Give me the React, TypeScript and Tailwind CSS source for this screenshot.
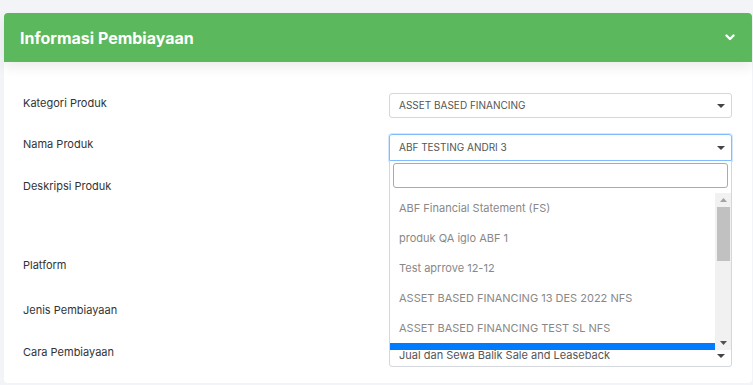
import React from "react";

const Caret = () => (
  <svg width="8" height="4" viewBox="0 0 8 4" className="shrink-0">
    <path d="M0 0 L8 0 L4 4 Z" fill="#444" />
  </svg>
);

const Row = ({
  label,
  h,
  children,
  z,
}: {
  label: string;
  h: string;
  children?: React.ReactNode;
  z?: string;
}) => (
  <div className={`flex ${h} ${z ?? ""}`}>
    <div className="w-[366px] shrink-0 pt-[2px] text-[11px] leading-[16px] text-[#333]">{label}</div>
    <div className="relative flex-1">{children}</div>
  </div>
);

const options = [
  "ABF Financial Statement (FS)",
  "produk QA iglo ABF 1",
  "Test aprrove 12-12",
  "ASSET BASED FINANCING 13 DES 2022 NFS",
  "ASSET BASED FINANCING TEST SL NFS",
];

export default function App() {
  return (
    <div
      className="min-h-[385px] w-[753px] bg-[#f3f4f8] pl-[4px] pr-[1px] pt-[13px]"
      style={{ fontFamily: "Inter, 'Noto Sans', sans-serif" }}
    >
      <div className="flex h-[370px] flex-col rounded-[4px] bg-white">
        <div className="relative z-10 flex h-[49px] items-center justify-between rounded-t-[4px] bg-[#5cb85c] pl-[16px] pr-[17px] shadow-[0_6px_12px_rgba(0,0,0,0.07)]">
          <span className="text-[16px] font-bold text-white">Informasi Pembiayaan</span>
          <svg width="10" height="7" viewBox="0 0 10 7">
            <polyline points="1.5,1.5 5,5 8.5,1.5" fill="none" stroke="#fff" strokeWidth="2.4" strokeLinecap="round" strokeLinejoin="round" />
          </svg>
        </div>
        <div className="flex flex-col gap-[15px] pl-[19px] pr-[20px] pt-[31px]">
          <Row label="Kategori Produk" h="h-[25px]">
            <div className="flex h-[25px] items-center justify-between rounded-[3px] border border-[#d3d6db] pl-[9px] pr-[6px] text-[10px] text-[#555]">
              <span>ASSET BASED FINANCING</span>
              <Caret />
            </div>
          </Row>
          <Row label="Nama Produk" h="h-[27px] mt-[1px]" z="relative z-20">
            <div className="flex h-[27px] items-center justify-between rounded-t-[3px] border border-[#80bdff] shadow-[0_0_0_1px_rgba(128,189,255,0.35)] pl-[9px] pr-[6px] text-[10px] text-[#555]">
              <span>ABF TESTING ANDRI 3</span>
              <Caret />
            </div>
            <div className="absolute left-0 right-0 top-[27px] border-x border-[#d3d6db] bg-white">
              <div className="px-[3px] pb-[5px] pt-[2px]">
                <div className="h-[25px] rounded-[3px] border border-[#aaa]" />
              </div>
              <div className="flex h-[157px]">
                <div className="flex-1 overflow-hidden">
                  {options.map((o) => (
                    <div key={o} className="flex h-[30px] items-center pl-[9px] text-[11px] text-[#888]">
                      {o}
                    </div>
                  ))}
                  <div className="h-[30px] bg-[#007bff]" />
                </div>
                <div className="flex w-[16px] flex-col items-center bg-[#f1f1f1]">
                  <div className="flex h-[14px] items-center">
                    <svg width="7" height="4" viewBox="0 0 7 4">
                      <path d="M0 4 L7 4 L3.5 0 Z" fill="#a3a3a3" />
                    </svg>
                  </div>
                  <div className="h-[54px] w-[13px] bg-[#c1c1c1]" />
                  <div className="flex-1" />
                  <div className="flex h-[14px] items-center">
                    <svg width="7" height="4" viewBox="0 0 7 4">
                      <path d="M0 0 L7 0 L3.5 4 Z" fill="#505050" />
                    </svg>
                  </div>
                </div>
              </div>
            </div>
          </Row>
          <Row label="Deskripsi Produk" h="h-[64px]">
            <div className="h-[64px] rounded-[3px] border border-[#d3d6db]" />
          </Row>
          <Row label="Platform" h="h-[30px]">
            <div className="h-[30px] rounded-[3px] border border-[#d3d6db]" />
          </Row>
          <Row label="Jenis Pembiayaan" h="h-[27px]">
            <div className="h-[27px] rounded-[3px] border border-[#d3d6db]" />
          </Row>
          <Row label="Cara Pembiayaan" h="h-[25px]">
            <div className="flex h-[25px] items-center justify-between rounded-[3px] border border-[#d3d6db] pl-[9px] pr-[6px] pt-[2px] text-[11px] text-[#555]">
              <span>Jual dan Sewa Balik Sale and Leaseback</span>
              <Caret />
            </div>
          </Row>
        </div>
      </div>
    </div>
  );
}
